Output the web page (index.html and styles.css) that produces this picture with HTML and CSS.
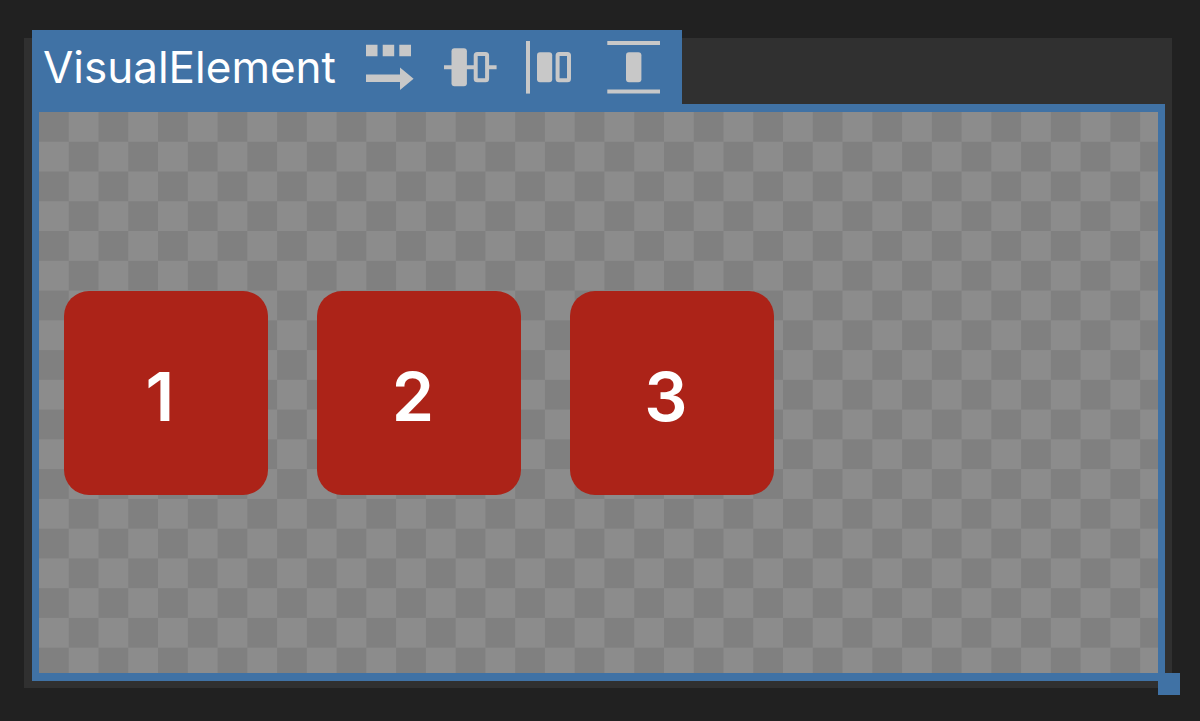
FILE: index.html
```html
<!DOCTYPE html>
<html lang="en">
<head>
<meta charset="utf-8">
<meta name="viewport" content="width=device-width, initial-scale=1">
<title>VisualElement</title>
<link rel="stylesheet" href="styles.css">
</head>
<body>
<main class="viewport">
  <header class="tab">
    <h1 class="tab-title">VisualElement</h1>
    <div class="tools">
      <button class="tool" type="button" aria-label="Flex direction: row">
        <svg viewBox="0 0 54 54" aria-hidden="true">
          <path d="M3 4.7h11.5v11.5H3zM19.7 4.7h11.5v11.5H19.7zM36.3 4.7h11.7v11.5H36.3zM3 34.6h34v-7.2l13.6 11.3L37 50v-7.9H3z"/>
        </svg>
      </button>
      <button class="tool" type="button" aria-label="Align items: center">
        <svg viewBox="0 0 54 54" aria-hidden="true">
          <path d="M0 25.2h8v4H0zM22 25.2h8v4H22zM45 25.2h7.6v4H45z"/>
          <rect x="7.5" y="8.2" width="15.4" height="38" rx="3"/>
          <rect class="outline" x="31.7" y="14.1" width="11.4" height="26.2" rx="1.5"/>
        </svg>
      </button>
      <button class="tool" type="button" aria-label="Justify content: start">
        <svg viewBox="0 0 54 54" aria-hidden="true">
          <path d="M1 1h4v52.6H1z"/>
          <rect x="12" y="12.2" width="15.2" height="30" rx="3"/>
          <rect class="outline" x="32.6" y="14.1" width="11.4" height="26.2" rx="1.5"/>
        </svg>
      </button>
      <button class="tool" type="button" aria-label="Align self: stretch">
        <svg viewBox="0 0 54 54" aria-hidden="true">
          <path d="M1.3 1h52.7v4H1.3zM1.3 49.4h52.7v4H1.3z"/>
          <rect x="20" y="12.2" width="15.4" height="30" rx="3"/>
        </svg>
      </button>
    </div>
  </header>
  <section class="canvas" aria-label="Canvas">
    <svg class="checker" viewBox="0 0 752 378" preserveAspectRatio="xMinYMin slice" aria-hidden="true">
      <defs>
        <pattern id="checks" width="40" height="40" patternUnits="userSpaceOnUse">
          <path d="M0 0h20v20H0zM20 20h20v20H20z"/>
        </pattern>
      </defs>
      <rect width="100%" height="100%" fill="url(#checks)"/>
    </svg>
    <div class="items">
      <div class="item">1</div>
      <div class="item">2</div>
      <div class="item">3</div>
    </div>
    <span class="handle"></span>
  </section>
</main>
</body>
</html>
```
FILE: styles.css
```css
:root {
  --blue: #4072a5;
  --icon: #c8c8c8;
}

* {
  box-sizing: border-box;
}

body {
  display: flex;
  min-height: 100vh;
  margin: 0;
  padding: 38px 28px 33px 24px;
  background: #212121;
  color: #fff;
  font-family: Inter, "Liberation Sans", sans-serif;
}

.viewport {
  display: flex;
  flex: 1;
  flex-direction: column;
  align-items: flex-start;
  padding: 0 7px 7px 8px;
  background: #303030;
}

.tab {
  display: flex;
  align-items: center;
  gap: 27px;
  margin-top: -8px;
  padding: 10px 22px 10px 11px;
  background: var(--blue);
}

.tab-title {
  margin: 0;
  font-size: 44px;
  font-weight: 400;
  line-height: 54px;
}

.tools {
  display: flex;
  gap: 27px;
}

.tool {
  display: block;
  width: 54px;
  height: 54px;
  padding: 0;
  border: 0;
  background: none;
}

.tool svg {
  display: block;
  fill: var(--icon);
}

.tool .outline {
  fill: none;
  stroke: var(--icon);
  stroke-width: 4;
}

.canvas {
  position: relative;
  display: flex;
  flex: 1;
  align-self: stretch;
  align-items: center;
  border: 8px solid var(--blue);
  border-width: 8px 7px;
  background: #8c8c8c;
}

.checker {
  position: absolute;
  inset: 0;
  width: 100%;
  height: 100%;
  fill: #808080;
}

.items {
  position: relative;
  display: flex;
  gap: 49px;
  padding: 25px;
}

.item {
  display: flex;
  align-items: center;
  justify-content: center;
  width: 204px;
  height: 204px;
  padding: 6px 12px 0 0;
  border-radius: 25px;
  background: #ac2318;
  font-size: 68px;
  font-weight: 600;
  line-height: 84px;
}

.handle {
  position: absolute;
  right: -22px;
  bottom: -22px;
  width: 22px;
  height: 22px;
  background: var(--blue);
}
```
